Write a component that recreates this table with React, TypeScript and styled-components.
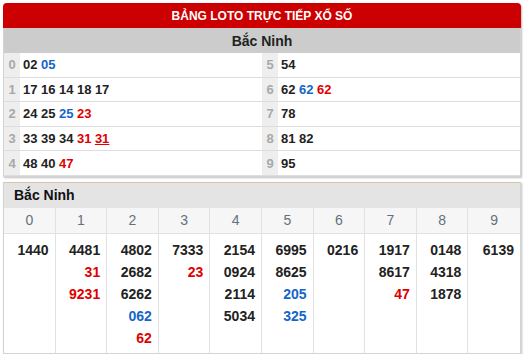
import React from "react";
import styled, { createGlobalStyle } from "styled-components";

const Global = createGlobalStyle`
  html, body { margin: 0; padding: 0; background: #fff; }
  body { font-family: "Liberation Sans", Arial, sans-serif; }
`;

const Page = styled.div`
  padding: 3px 5px 0 3px;
  display: flex;
  flex-direction: column;
  gap: 5px;
  width: 518px;
`;

const Panel = styled.div`
  border: 1px solid #d4d4d4;
  border-top: none;
  border-radius: 4px 4px 0 0;
  box-shadow: 1px 1px 2px rgba(0, 0, 0, 0.25);
  background: #fff;
`;

const RedHeader = styled.div`
  height: 25px;
  background: #cc0000;
  color: #fff;
  font-weight: bold;
  font-size: 12px;
  display: flex;
  align-items: center;
  justify-content: center;
  border-radius: 4px 4px 0 0;
  margin: 0 -1px;
`;

const GrayHeader = styled.div`
  height: 25px;
  background: #cccccc;
  color: #222;
  font-weight: bold;
  font-size: 14px;
  display: flex;
  align-items: center;
  justify-content: center;
`;

const LotoGrid = styled.div`
  display: grid;
  grid-template-columns: 1fr 1fr;
`;

const LotoCol = styled.div`
  display: flex;
  flex-direction: column;
`;

const LotoRow = styled.div`
  display: flex;
  height: 23.6px;
  border-bottom: 1px solid #dddddd;
`;

const HeadCell = styled.div`
  width: 16px;
  background: #eeeeee;
  color: #a8a8a8;
  font-weight: bold;
  font-size: 13px;
  display: flex;
  align-items: center;
  justify-content: center;
`;

const NumsCell = styled.div`
  flex: 1;
  display: flex;
  align-items: center;
  gap: 3.5px;
  padding-left: 3px;
  font-size: 13px;
  font-weight: bold;
  color: #222;
`;

type Tone = "dark" | "blue" | "red";
const toneColor: Record<Tone, string> = {
  dark: "#222222",
  blue: "#1566c8",
  red: "#e00000",
};

const Num = styled.span<{ $tone: Tone; $under?: boolean }>`
  color: ${(p) => toneColor[p.$tone]};
  text-decoration: ${(p) => (p.$under ? "underline" : "none")};
`;

const BottomPanel = styled.div`
  border: 1px solid #d4d4d4;
  border-top: 1px solid #d9c9ab;
  box-shadow: 1px 1px 2px rgba(0, 0, 0, 0.25);
  background: #fff;
`;

const SubHeader = styled.div`
  height: 25px;
  background: #e4e4e4;
  color: #111;
  font-weight: bold;
  font-size: 14px;
  display: flex;
  align-items: center;
  padding-left: 10px;
`;

const DigitRow = styled.div`
  display: grid;
  grid-template-columns: repeat(10, 1fr);
  height: 25px;
  background: #f6f6f6;
  border-bottom: 1px solid #e2e2e2;
`;

const DigitCell = styled.div<{ $last?: boolean }>`
  display: flex;
  align-items: center;
  justify-content: center;
  color: #66707c;
  font-size: 14px;
  border-right: ${(p) => (p.$last ? "none" : "1px solid #e2e2e2")};
`;

const BodyRow = styled.div`
  display: grid;
  grid-template-columns: repeat(10, 1fr);
`;

const BodyCell = styled.div<{ $last?: boolean }>`
  display: flex;
  flex-direction: column;
  align-items: flex-end;
  padding: 5px 6px 4px 0;
  min-height: 110px;
  border-right: ${(p) => (p.$last ? "none" : "1px solid #e2e2e2")};
`;

const BigNum = styled.div<{ $tone: Tone }>`
  height: 22px;
  line-height: 22px;
  font-size: 14px;
  font-weight: bold;
  color: ${(p) => toneColor[p.$tone]};
`;

type Item = { v: string; t: Tone; u?: boolean };
const d = (v: string): Item => ({ v, t: "dark" });
const b = (v: string): Item => ({ v, t: "blue" });
const r = (v: string, u?: boolean): Item => ({ v, t: "red", u });

const loto: Item[][] = [
  [d("02"), b("05")],
  [d("17"), d("16"), d("14"), d("18"), d("17")],
  [d("24"), d("25"), b("25"), r("23")],
  [d("33"), d("39"), d("34"), r("31"), r("31", true)],
  [d("48"), d("40"), r("47")],
  [d("54")],
  [d("62"), b("62"), r("62")],
  [d("78")],
  [d("81"), d("82")],
  [d("95")],
];

const tails: Item[][] = [
  [d("1440")],
  [d("4481"), r("31"), r("9231")],
  [d("4802"), d("2682"), d("6262"), b("062"), r("62")],
  [d("7333"), r("23")],
  [d("2154"), d("0924"), d("2114"), d("5034")],
  [d("6995"), d("8625"), b("205"), b("325")],
  [d("0216")],
  [d("1917"), d("8617"), r("47")],
  [d("0148"), d("4318"), d("1878")],
  [d("6139")],
];

function Column({ start }: { start: number }) {
  return (
    <LotoCol>
      {[0, 1, 2, 3, 4].map((i) => (
        <LotoRow key={i}>
          <HeadCell>{start + i}</HeadCell>
          <NumsCell>
            {loto[start + i].map((n, k) => (
              <Num key={k} $tone={n.t} $under={n.u}>
                {n.v}
              </Num>
            ))}
          </NumsCell>
        </LotoRow>
      ))}
    </LotoCol>
  );
}

export default function App() {
  return (
    <>
      <Global />
      <Page>
        <Panel>
          <RedHeader>BẢNG LOTO TRỰC TIẾP XỔ SỐ</RedHeader>
          <GrayHeader>Bắc Ninh</GrayHeader>
          <LotoGrid>
            <Column start={0} />
            <Column start={5} />
          </LotoGrid>
        </Panel>
        <BottomPanel>
          <SubHeader>Bắc Ninh</SubHeader>
          <DigitRow>
            {tails.map((_, i) => (
              <DigitCell key={i} $last={i === 9}>
                {i}
              </DigitCell>
            ))}
          </DigitRow>
          <BodyRow>
            {tails.map((col, i) => (
              <BodyCell key={i} $last={i === 9}>
                {col.map((n, k) => (
                  <BigNum key={k} $tone={n.t}>
                    {n.v}
                  </BigNum>
                ))}
              </BodyCell>
            ))}
          </BodyRow>
        </BottomPanel>
      </Page>
    </>
  );
}
